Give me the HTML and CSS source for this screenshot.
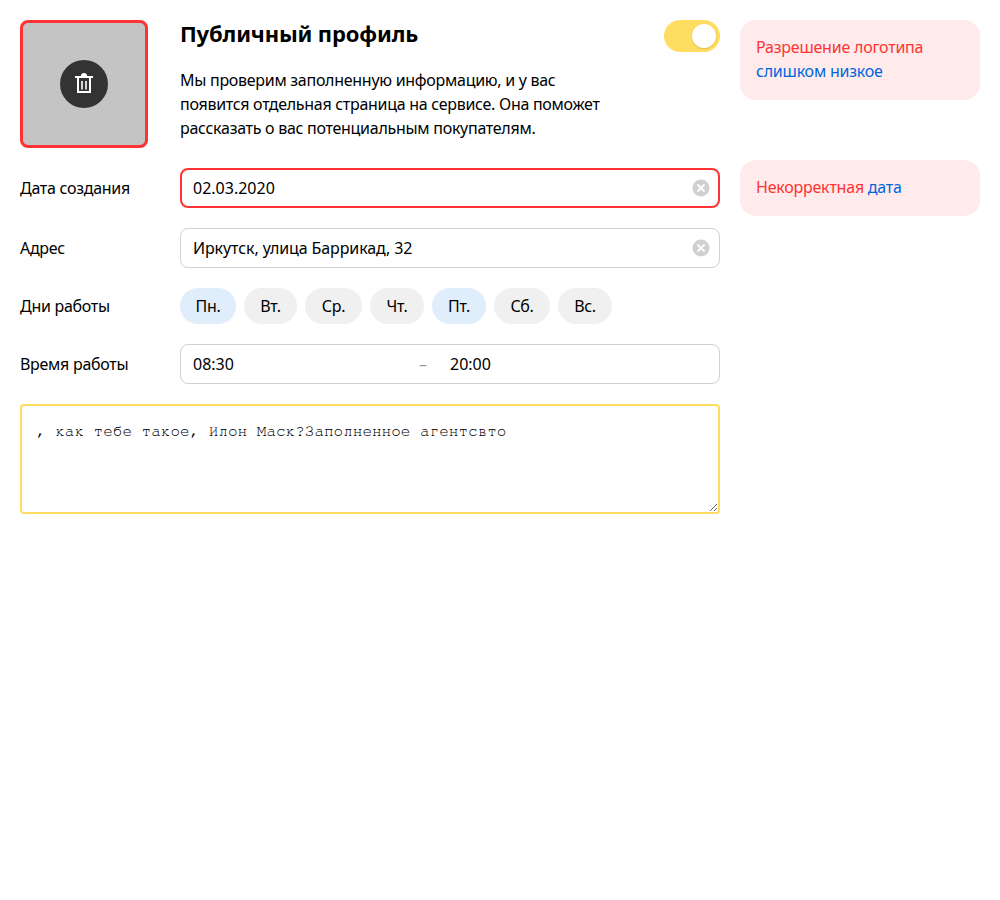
FILE: index.html
```html
<!DOCTYPE html>
<html lang="ru">
<head>
  <meta charset="utf-8">
  <title>Публичный профиль</title>
  <link rel="stylesheet" href="styles.css">
</head>
<body>
  <div class="page">
    <div class="form">
      <section class="profile">
        <div class="logo">
          <button type="button" class="logo-delete" aria-label="Удалить">
            <svg class="trash" width="18" height="20" viewBox="0 0 18 20">
              <path d="M0 3h5.800C6 1 7.200 0 9 0s3 1 3.200 3H18v2H0z" fill="#fff"/>
              <path d="M3 5v14h12V5" fill="none" stroke="#fff" stroke-width="2"/>
              <path d="M7 8v8.500M11 8v8.500" fill="none" stroke="#fff" stroke-width="1.600"/>
            </svg>
          </button>
        </div>
        <div class="profile-info">
          <div class="profile-head">
            <h1>Публичный профиль</h1>
            <span class="toggle"><span class="toggle-knob"></span></span>
          </div>
          <p>Мы проверим заполненную информацию, и у вас появится отдельная страница на сервисе. Она поможет рассказать о вас потенциальным покупателям.</p>
        </div>
      </section>

      <div class="row">
        <label class="row-label">Дата создания</label>
        <div class="field field-error">
          <span class="field-value">02.03.2020</span>
          <svg class="clear" width="18" height="18" viewBox="0 0 18 18">
            <circle cx="9" cy="9" r="8.500" fill="#d0d0d0"/>
            <path d="M5.500 5.500l7 7M12.500 5.500l-7 7" stroke="#fff" stroke-width="1.800"/>
          </svg>
        </div>
      </div>

      <div class="row">
        <label class="row-label">Адрес</label>
        <div class="field">
          <span class="field-value">Иркутск, улица Баррикад, 32</span>
          <svg class="clear" width="18" height="18" viewBox="0 0 18 18">
            <circle cx="9" cy="9" r="8.500" fill="#d0d0d0"/>
            <path d="M5.500 5.500l7 7M12.500 5.500l-7 7" stroke="#fff" stroke-width="1.800"/>
          </svg>
        </div>
      </div>

      <div class="row">
        <label class="row-label">Дни работы</label>
        <div class="days">
          <span class="day day-on day-wide">Пн.</span>
          <span class="day day-tue">Вт.</span>
          <span class="day day-wed">Ср.</span>
          <span class="day">Чт.</span>
          <span class="day day-on">Пт.</span>
          <span class="day day-wide">Сб.</span>
          <span class="day">Вс.</span>
        </div>
      </div>

      <div class="row">
        <label class="row-label">Время работы</label>
        <div class="field">
          <span class="time">08:30</span>
          <span class="dash">–</span>
          <span class="time-end">20:00</span>
        </div>
      </div>

      <textarea class="note">, как тебе такое, Илон Маск?Заполненное агентсвто</textarea>
    </div>

    <aside class="errors">
      <div class="error error-logo">Разрешение логотипа <a href="#">слишком низкое</a></div>
      <div class="error">Некорректная <a href="#">дата</a></div>
    </aside>
  </div>
</body>
</html>
```

FILE: styles.css
```css
* {
  box-sizing: border-box;
}

body {
  margin: 0;
  padding: 20px;
  background: #fff;
  color: #000;
  font-family: "Noto Sans", sans-serif;
  font-size: 16px;
  line-height: 24px;
  letter-spacing: -0.28px;
}

.page {
  display: flex;
  gap: 20px;
  align-items: flex-start;
}

.form {
  width: 700px;
  display: flex;
  flex-direction: column;
  gap: 20px;
}

.profile {
  display: flex;
  gap: 32px;
}

.logo {
  width: 128px;
  height: 128px;
  flex-shrink: 0;
  display: flex;
  align-items: center;
  justify-content: center;
  background: #c4c4c4;
  border: 3px solid #ff3333;
  border-radius: 8px;
}

.logo-delete {
  width: 48px;
  height: 48px;
  padding: 0;
  display: flex;
  align-items: center;
  justify-content: center;
  background: #333;
  border: 0;
  border-radius: 50%;
}

.trash {
  margin-bottom: 2px;
}

.profile-info {
  flex: 1;
}

.profile-head {
  display: flex;
  justify-content: space-between;
  align-items: flex-start;
  margin-bottom: 16px;
}

h1 {
  margin: -2px 0 2px;
  font-size: 22px;
  line-height: 30px;
  font-weight: 700;
  letter-spacing: -0.15px;
}

.profile-info p {
  margin: 0;
  width: 440px;
}

.toggle {
  width: 56px;
  height: 32px;
  display: flex;
  justify-content: flex-end;
  align-items: center;
  padding-right: 4px;
  background: #ffdd60;
  border-radius: 16px;
}

.toggle-knob {
  width: 24px;
  height: 24px;
  background: #fff;
  border-radius: 50%;
  box-shadow: 0 1px 2px rgba(0, 0, 0, 0.15);
}

.row {
  display: flex;
  align-items: center;
}

.row-label {
  width: 160px;
  flex-shrink: 0;
}

.field {
  flex: 1;
  height: 40px;
  display: flex;
  align-items: center;
  padding: 0 12px;
  background: #fff;
  border: 1px solid #d0d0d0;
  border-radius: 8px;
  letter-spacing: -0.1px;
}

.field-error {
  border: 2px solid #ff3333;
  padding: 0 11px;
  letter-spacing: 0;
}

.field-value {
  flex: 1;
}

.clear {
  margin-right: -3px;
}

.days {
  display: flex;
  gap: 8px;
}

.day {
  width: 54px;
  height: 36px;
  display: flex;
  align-items: center;
  justify-content: center;
  background: #f0f0f0;
  border-radius: 18px;
}

.day-wide {
  width: 56px;
}

.day-tue {
  width: 53px;
}

.day-wed {
  width: 57px;
}

.day-on {
  background: #e0eefb;
}

.time {
  width: 226px;
  letter-spacing: 0;
}

.dash {
  width: 31px;
  color: #999;
}

.time-end {
  letter-spacing: 0;
}

.note {
  display: block;
  width: 700px;
  height: 110px;
  padding: 15px 14px;
  border: 2px solid #ffdd60;
  border-radius: 4px;
  color: #000;
  font-family: "FreeMono", "Liberation Mono", monospace;
  font-size: 16px;
  line-height: 20px;
  letter-spacing: 0;
  outline: none;
}

.errors {
  width: 240px;
  display: flex;
  flex-direction: column;
  gap: 60px;
}

.error {
  padding: 15px 16px 17px;
  background: #ffebeb;
  border-radius: 16px;
  color: #ff3333;
  letter-spacing: -0.22px;
}

.error a {
  color: #0066dd;
  text-decoration: none;
}
```
